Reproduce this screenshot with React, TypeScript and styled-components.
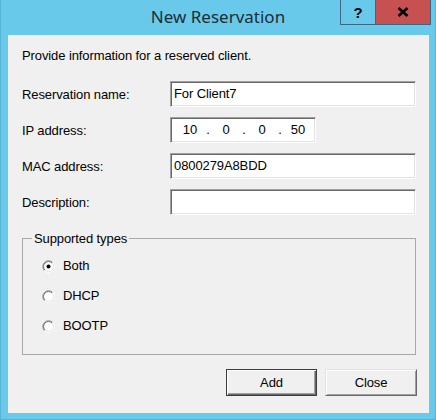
import React from "react";
import styled, { createGlobalStyle } from "styled-components";

const Global = createGlobalStyle`
  html, body { margin: 0; padding: 0; }
  body { width: 436px; height: 420px; overflow: hidden; }
  * { box-sizing: border-box; }
`;

const Frame = styled.div`
  width: 436px;
  height: 420px;
  background: #69c9ea;
  box-shadow: inset 1px 0 0 #56b2d6, inset -1px 0 0 #56b2d6, inset 0 -1px 0 #56b2d6;
  display: flex;
  flex-direction: column;
  font-family: "Liberation Sans", Arial, sans-serif;
  font-size: 13px;
  letter-spacing: -0.1px;
  color: #000;
`;

const TitleBar = styled.div`
  height: 35px;
  flex: none;
  display: grid;
  grid-template-columns: 1fr auto 1fr;
  align-items: start;
`;

const Title = styled.div`
  grid-column: 2;
  font-family: "Noto Sans", "Open Sans", sans-serif;
  font-size: 17px;
  letter-spacing: 0;
  line-height: 20px;
  padding-top: 7px;
  color: #1c2d36;
`;

const CaptionButtons = styled.div`
  grid-column: 3;
  justify-self: end;
  margin-right: 5px;
  display: flex;
  height: 25px;
  border: 1px solid #3a6880;
  border-top: none;
`;

const CaptionButton = styled.div<{ $w: number; $bg: string }>`
  width: ${(p) => p.$w}px;
  height: 24px;
  background: ${(p) => p.$bg};
  display: flex;
  align-items: center;
  justify-content: center;
  & + & { border-left: 1px solid #3a6880; }
`;

const HelpGlyph = styled.span`
  font-family: "Liberation Sans", Arial, sans-serif;
  font-weight: 700;
  font-size: 15px;
  line-height: 1;
  color: #000;
  margin-top: 1px;
`;

const Client = styled.div`
  flex: 1;
  margin: 0 7px 7px 8px;
  background: #f0f0f0;
  padding: 13px 13px 16px 14px;
  display: flex;
  flex-direction: column;
`;

const Intro = styled.div`
  line-height: 16px;
  height: 16px;
`;

const Form = styled.div`
  margin-top: 17px;
  display: grid;
  grid-template-columns: 148px 1fr;
  grid-auto-rows: 26px;
  row-gap: 10px;
`;

const Label = styled.div`
  align-self: center;
  line-height: 16px;
  padding-top: 1px;
`;

const sunken = `
  background: #fff;
  border-style: solid;
  border-width: 1px;
  border-color: #a0a0a0 #ffffff #ffffff #a0a0a0;
  box-shadow: inset 1px 1px 0 #696969, inset -1px -1px 0 #e3e3e3;
`;

const TextBox = styled.div`
  ${sunken}
  height: 26px;
  padding: 4px 3px;
  line-height: 16px;
`;

const IpBox = styled.div`
  ${sunken}
  width: 146px;
  height: 26px;
  padding: 0 0 0 5px;
  display: flex;
  align-items: center;
`;

const IpPart = styled.span`
  width: 28px;
  text-align: center;
  line-height: 16px;
`;

const IpDot = styled.span`
  width: 8px;
  text-align: center;
  line-height: 16px;
`;

const Group = styled.fieldset`
  margin: 16px 0 0 0;
  min-width: 0;
  border: 1px solid #a8a8a8;
  padding: 12px 9px 20px 9px;
  display: flex;
  flex-direction: column;
  gap: 14px;
`;

const Legend = styled.legend`
  padding: 0 2px;
  line-height: 15px;
  margin-left: 0;
`;

const RadioRow = styled.label`
  display: flex;
  align-items: center;
  height: 16px;
  line-height: 16px;
  padding-left: 10px;
  gap: 8px;
`;

const Buttons = styled.div`
  margin-top: 14px;
  margin-right: -1px;
  display: flex;
  justify-content: flex-end;
  gap: 8px;
`;

const PushButton = styled.div<{ $default?: boolean; $w: number }>`
  width: ${(p) => p.$w}px;
  height: 27px;
  background: #f0f0f0;
  display: flex;
  align-items: center;
  justify-content: center;
  line-height: 16px;
  border-style: solid;
  border-width: 1px;
  ${(p) =>
    p.$default
      ? `border-color: #3c3c3c;
         box-shadow: inset 1px 1px 0 #ffffff, inset -1px -1px 0 #696969, inset -2px -2px 0 #a0a0a0;`
      : `border-color: #e3e3e3 #696969 #696969 #e3e3e3;
         box-shadow: inset 1px 1px 0 #ffffff, inset -1px -1px 0 #a0a0a0;`}
`;

const Radio: React.FC<{ checked?: boolean }> = ({ checked }) => (
  <svg width="13" height="13" viewBox="0 0 13 13">
    <circle cx="6.5" cy="6.5" r="5.5" fill="#fff" />
    <path d="M2.26 10.74 A6 6 0 0 1 10.74 2.26" fill="none" stroke="#a0a0a0" strokeWidth="1" />
    <path d="M2.96 10.04 A5 5 0 0 1 10.04 2.96" fill="none" stroke="#696969" strokeWidth="1" />
    <path d="M10.74 2.26 A6 6 0 0 1 2.26 10.74" fill="none" stroke="#ffffff" strokeWidth="1" />
    <path d="M10.04 2.96 A5 5 0 0 1 2.96 10.04" fill="none" stroke="#e3e3e3" strokeWidth="1" />
    {checked && <circle cx="6.5" cy="6.5" r="2" fill="#000" />}
  </svg>
);

const CloseGlyph = () => (
  <svg width="12" height="10" viewBox="0 0 12 10">
    <path d="M1.5 1 L10.5 9 M10.5 1 L1.5 9" stroke="#000" strokeWidth="2.6" strokeLinecap="butt" />
  </svg>
);

export default function App() {
  return (
    <>
      <Global />
      <Frame>
        <TitleBar>
          <Title>New Reservation</Title>
          <CaptionButtons>
            <CaptionButton $w={34} $bg="#69c9ea">
              <HelpGlyph>?</HelpGlyph>
            </CaptionButton>
            <CaptionButton $w={55} $bg="#c75050">
              <CloseGlyph />
            </CaptionButton>
          </CaptionButtons>
        </TitleBar>
        <Client>
          <Intro>Provide information for a reserved client.</Intro>
          <Form>
            <Label>Reservation name:</Label>
            <TextBox>For Client7</TextBox>
            <Label>IP address:</Label>
            <div>
              <IpBox>
                <IpPart>10</IpPart>
                <IpDot>.</IpDot>
                <IpPart>0</IpPart>
                <IpDot>.</IpDot>
                <IpPart>0</IpPart>
                <IpDot>.</IpDot>
                <IpPart>50</IpPart>
              </IpBox>
            </div>
            <Label>MAC address:</Label>
            <TextBox>0800279A8BDD</TextBox>
            <Label>Description:</Label>
            <TextBox />
          </Form>
          <Group>
            <Legend>Supported types</Legend>
            <RadioRow>
              <Radio checked />
              Both
            </RadioRow>
            <RadioRow>
              <Radio />
              DHCP
            </RadioRow>
            <RadioRow>
              <Radio />
              BOOTP
            </RadioRow>
          </Group>
          <Buttons>
            <PushButton $default $w={91}>Add</PushButton>
            <PushButton $w={92}>Close</PushButton>
          </Buttons>
        </Client>
      </Frame>
    </>
  );
}
